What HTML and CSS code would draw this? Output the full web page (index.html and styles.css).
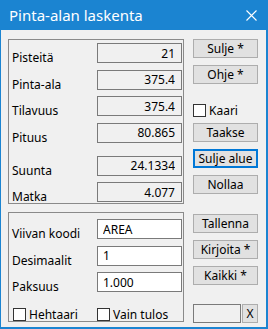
FILE: index.html
```html
<!DOCTYPE html>
<html lang="fi">

<head>
    <meta charset="UTF-8">
    <meta name="viewport" content="width=device-width, initial-scale=1.0">
    <title>Pinta-alan laskenta</title>
    <link rel="stylesheet" href="styles.css">
</head>

<body>

    <div class="window">
        <div class="titlebar">
            <span class="title">Pinta-alan laskenta</span>
            <svg class="close" width="11" height="11" viewBox="0 0 11 11">
                <path d="M0.5 0.5 L10.5 10.5 M10.5 0.5 L0.5 10.5" stroke="#fff" stroke-width="1.1" fill="none" />
            </svg>
        </div>

        <div class="client">
            <div class="left">
                <!-- tulokset -->
                <div class="group results">
                    <div class="row"><span class="label">Pisteitä</span><input class="field readonly" value="21" readonly></div>
                    <div class="row"><span class="label">Pinta-ala</span><input class="field readonly" value="375.4" readonly></div>
                    <div class="row"><span class="label">Tilavuus</span><input class="field readonly" value="375.4" readonly></div>
                    <div class="row"><span class="label">Pituus</span><input class="field readonly" value="80.865" readonly></div>
                    <div class="row row-sep"><span class="label">Suunta</span><input class="field readonly" value="24.1334" readonly></div>
                    <div class="row"><span class="label">Matka</span><input class="field readonly" value="4.077" readonly></div>
                </div>

                <!-- asetukset -->
                <div class="group settings">
                    <div class="row"><span class="label">Viivan koodi</span><input class="field" value="AREA"></div>
                    <div class="row"><span class="label">Desimaalit</span><input class="field" value="1"></div>
                    <div class="row"><span class="label">Paksuus</span><input class="field" value="1.000"></div>
                    <div class="checks">
                        <label class="check check-wide"><span class="box"></span>Hehtaari</label>
                        <label class="check"><span class="box"></span>Vain tulos</label>
                    </div>
                </div>
            </div>

            <div class="right">
                <button class="btn">Sulje *</button>
                <button class="btn">Ohje *</button>
                <label class="check kaari"><span class="box"></span>Kaari</label>
                <button class="btn btn-taakse">Taakse</button>
                <button class="btn btn-default">Sulje alue</button>
                <button class="btn">Nollaa</button>
                <button class="btn btn-tallenna">Tallenna</button>
                <button class="btn">Kirjoita *</button>
                <button class="btn">Kaikki *</button>
                <div class="bottom">
                    <input class="small-field readonly" value="" readonly>
                    <button class="btn btn-x">X</button>
                </div>
            </div>
        </div>
    </div>

</body>

</html>
```

FILE: styles.css
```css
:root {
    --accent: #1b84d1;
    --face: #f0f0f0;
    --btn-face: #e1e1e1;
    --btn-border: #adadad;
    --edit-border: #7a7a7a;
}

body {
    margin: 0;
    font-family: 'Noto Sans', 'Liberation Sans', sans-serif;
    font-size: 12px;
    color: #000;
}

.window {
    width: 268px;
    height: 329px;
    box-sizing: border-box;
    background-color: var(--face);
    border: 2px solid var(--accent);
    border-top: 0;
    border-left-width: 1px;
    display: flex;
    flex-direction: column;
}

.titlebar {
    height: 30px;
    flex-shrink: 0;
    background-color: var(--accent);
    color: white;
    display: flex;
    align-items: center;
    justify-content: space-between;
    padding: 0 9px 0 8px;
}

.title {
    font-size: 15px;
    margin-top: -1px;
}

.close {
    display: block;
}

.client {
    display: flex;
    gap: 9px;
    padding: 9px 0 0 7px;
}

.left {
    width: 176px;
    display: flex;
    flex-direction: column;
    gap: 8px;
}

.group {
    box-sizing: border-box;
    border: 1px solid #8a8a8a;
    padding: 3px 0 0 3px;
}

.results {
    height: 165px;
}

.settings {
    height: 110px;
    padding-top: 6px;
}

.row {
    display: flex;
    align-items: flex-end;
    height: 20px;
}

.results .row + .row {
    margin-top: 6.6px;
}

.results .row-sep {
    margin-top: 13px !important;
}

.settings .row + .row {
    margin-top: 6.5px;
}

.label {
    width: 85px;
    line-height: 14px;
    margin-bottom: -2px;
}

.field {
    box-sizing: border-box;
    width: 85px;
    height: 20px;
    margin: 0;
    padding: 0 5px;
    border: 1px solid var(--edit-border);
    background-color: white;
    font-family: inherit;
    font-size: 12px;
    color: #000;
    outline: none;
}

.field.readonly {
    background-color: var(--face);
    text-align: right;
    padding-right: 6px;
}

.checks {
    display: flex;
    margin-top: 13px;
    margin-left: 1px;
}

.check {
    display: flex;
    align-items: center;
    gap: 3px;
    height: 19px;
}

.check-wide {
    width: 84px;
}

.box {
    width: 11px;
    height: 11px;
    border: 1px solid #333;
    background-color: white;
}

.right {
    width: 65px;
    display: flex;
    flex-direction: column;
}

.btn {
    box-sizing: border-box;
    height: 19px;
    margin: 7px 0 0;
    padding: 0;
    background-color: var(--btn-face);
    border: 1px solid var(--btn-border);
    font-family: inherit;
    font-size: 12px;
    color: #000;
    line-height: 15px;
}

.btn:first-child {
    margin-top: 0;
}

.kaari {
    margin-top: 17px;
}

.btn-taakse {
    margin-top: 3px;
}

.btn-default {
    border: 2px solid #0078d7;
}

.btn-tallenna {
    margin-top: 20px;
}

.bottom {
    display: flex;
    gap: 1px;
    margin-top: 19px;
}

.small-field {
    box-sizing: border-box;
    width: 48px;
    height: 19px;
    margin: 0;
    border: 1px solid var(--edit-border);
    background-color: var(--face);
}

.btn-x {
    width: 16px;
    margin: 0;
}
```
